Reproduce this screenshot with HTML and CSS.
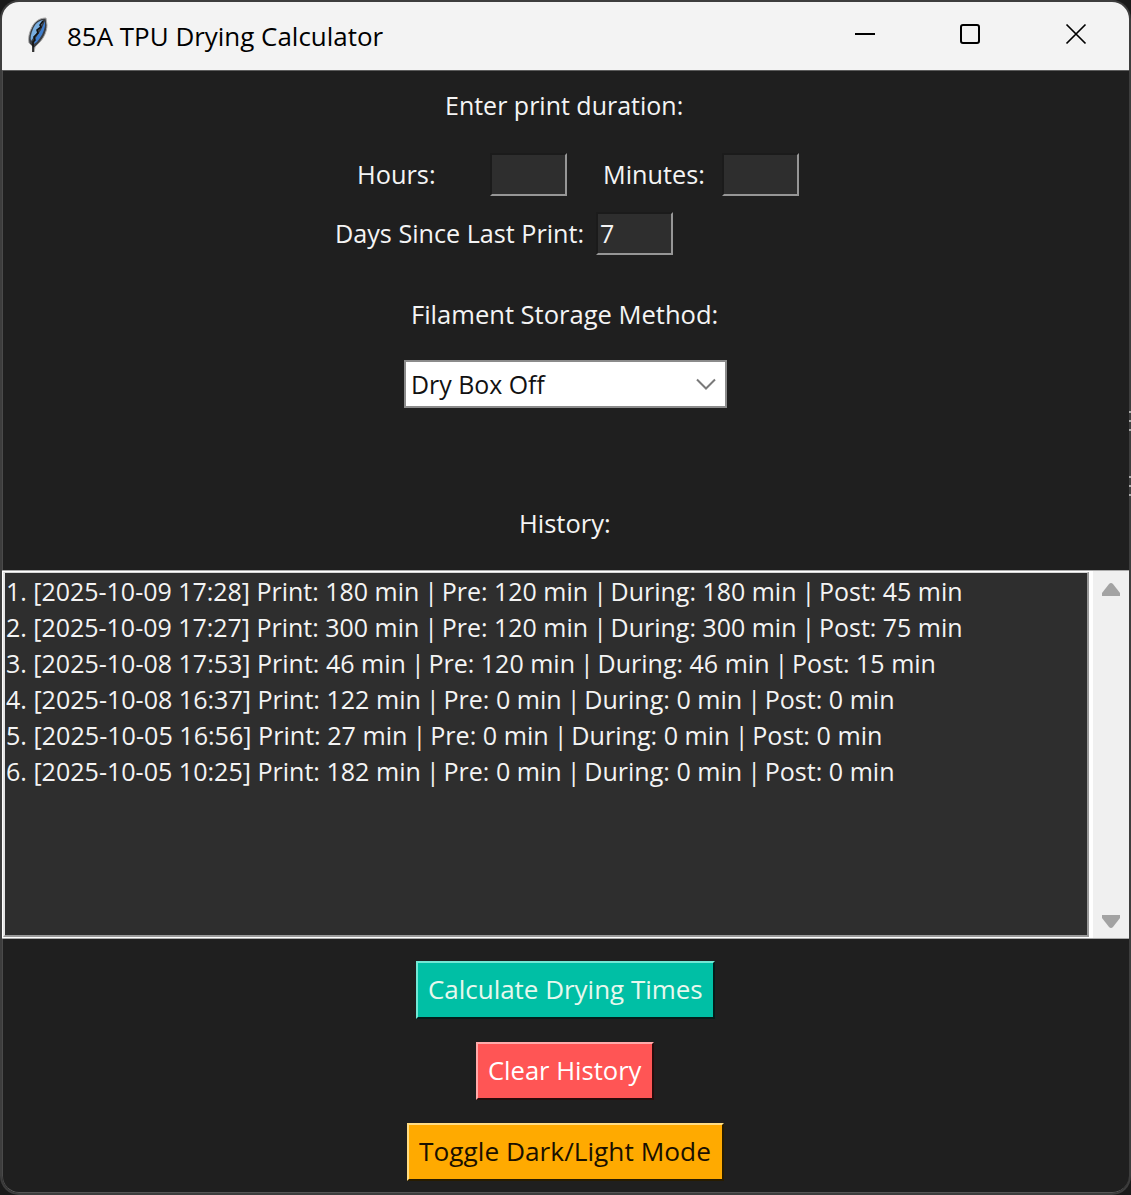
FILE: index.html
```html
<!DOCTYPE html>
<html lang="en">
<head>
<meta charset="utf-8">
<title>85A TPU Drying Calculator</title>
<link rel="stylesheet" href="styles.css">
</head>
<body>
<div class="window">
  <header class="titlebar">
    <svg class="feather" width="22" height="38" viewBox="0 0 22 38">
      <path d="M19 2C13 2 8 5 5 11C2 17 1 22 2 27L6 31L7 36L8 31L12 27C17 22 20 15 20 9Z" fill="#3a3d42" stroke="#aaa" stroke-width="1"/>
      <path d="M16 4C11 5 8 8 6 13C4 18 3 22 4 25L9 18L15 8Z" fill="#79aee0"/>
      <path d="M18 5L18 10C17 16 14 21 10 26L7 28L8 23L14 14Z" fill="#3f7dcc"/>
      <path d="M16 5L13 9L14 11L10 14L11 17L7 21L8 24L6 26V36" fill="none" stroke="#111" stroke-width="1.600"/>
    </svg>
    <h1 class="title"><span class="t t-title">85A TPU Drying Calculator</span></h1>
    <svg class="controls" width="232" height="24" viewBox="0 0 232 24" fill="none" stroke="#000" stroke-width="2">
      <path d="M0 12H20"/>
      <rect x="106" y="3" width="18" height="18" rx="2"/>
      <path d="M211.500 2.500L230.500 21.500M230.500 2.500L211.500 21.500" stroke-width="1.700"/>
    </svg>
  </header>
  <main class="content">
    <div class="label prompt"><span class="t t-enter">Enter print duration:</span></div>
    <div class="row time-row">
      <label class="hours"><span class="t t-hours">Hours:</span></label>
      <div class="entry"></div>
      <label class="minutes"><span class="t t-minutes">Minutes:</span></label>
      <div class="entry"></div>
    </div>
    <div class="row days-row">
      <label class="days"><span class="t t-days">Days Since Last Print:</span></label>
      <div class="entry"><span class="t">7</span></div>
    </div>
    <div class="label storage"><span class="t t-storage">Filament Storage Method:</span></div>
    <div class="combo">
      <span class="t t-combo">Dry Box Off</span>
      <svg width="20" height="12" viewBox="0 0 20 12" fill="none" stroke="#7a7a7a" stroke-width="2"><path d="M1 1.500L10 10.500L19 1.500"/></svg>
    </div>
    <div class="label history"><span class="t t-history">History:</span></div>
    <div class="list-row">
      <div class="listbox">
        <div class="item"><span class="t t-i1">1. [2025-10-09 17:28] Print: 180 min<b> | </b>Pre: 120 min<b> | </b>During: 180 min<b> | </b>Post: 45 min</span></div>
        <div class="item"><span class="t t-i1">2. [2025-10-09 17:27] Print: 300 min<b> | </b>Pre: 120 min<b> | </b>During: 300 min<b> | </b>Post: 75 min</span></div>
        <div class="item"><span class="t t-i3">3. [2025-10-08 17:53] Print: 46 min<b> | </b>Pre: 120 min<b> | </b>During: 46 min<b> | </b>Post: 15 min</span></div>
        <div class="item"><span class="t t-i4">4. [2025-10-08 16:37] Print: 122 min<b> | </b>Pre: 0 min<b> | </b>During: 0 min<b> | </b>Post: 0 min</span></div>
        <div class="item"><span class="t t-i5">5. [2025-10-05 16:56] Print: 27 min<b> | </b>Pre: 0 min<b> | </b>During: 0 min<b> | </b>Post: 0 min</span></div>
        <div class="item"><span class="t t-i4">6. [2025-10-05 10:25] Print: 182 min<b> | </b>Pre: 0 min<b> | </b>During: 0 min<b> | </b>Post: 0 min</span></div>
      </div>
      <div class="scrollbar">
        <svg width="20" height="15" viewBox="0 0 20 15"><path d="M1 14V11L8 2Q10 0 12 2L19 11V14Z" fill="#a3a3a3"/></svg>
        <svg width="20" height="15" viewBox="0 0 20 15"><path d="M1 1V4L8 13Q10 15 12 13L19 4V1Z" fill="#a3a3a3"/></svg>
      </div>
    </div>
    <div class="actions">
      <button class="btn calc"><span class="t t-calc">Calculate Drying Times</span></button>
      <button class="btn clear"><span class="t t-clear">Clear History</span></button>
      <button class="btn toggle"><span class="t t-toggle">Toggle Dark/Light Mode</span></button>
    </div>
  </main>
</div>
<div class="edge-marks"><i></i><i></i><i></i><i></i><i></i><i></i></div>
</body>
</html>
```
FILE: styles.css
```css
* { box-sizing: border-box; }
body {
  margin: 0;
  width: 1131px;
  height: 1195px;
  padding: 2px 2px 2px 2px;
  overflow: hidden;
  background: linear-gradient(#3b3b3b, #3b3b3b) 20px 0 / 1091px 2px no-repeat, #1a1a1a;
  color: #f4f4f4;
  font: 26px/36px "Open Sans", "Noto Sans", sans-serif;
}
.window {
  width: 1127px;
  height: 1191px;
  border-radius: 17px;
  overflow: hidden;
  display: flex;
  flex-direction: column;
  background: #1f1f1f;
  box-shadow: 0 0 0 2px #3d3d3d;
}
.titlebar {
  height: 69px;
  flex: none;
  display: flex;
  align-items: flex-start;
  background: #f3f3f3;
  border-bottom: 1px solid #5c5c5c;
  color: #000;
}
.feather { margin: 14px 0 0 25px; }
.title { margin: 16px 0 0 18px; font: inherit; width: 320px; white-space: nowrap; }
.controls { margin: 20px 42px 0 auto; }

/* Labels are set slightly condensed */
.t {
  display: inline-block;
  white-space: pre;
  transform: scaleX(0.96);
  transform-origin: 0 50%;
}
.t b { font-weight: inherit; letter-spacing: -1.45px; }
.t-title { transform: scaleX(0.998); }
.t-enter { transform: scaleX(0.961); }
.t-hours { transform: scaleX(0.975); }
.t-minutes { transform: scaleX(0.97); }
.t-days { transform: scaleX(0.968); }
.t-storage { transform: scaleX(0.982); }
.t-combo { transform: scaleX(0.957); }
.t-history { transform: scaleX(0.98); }
.t-i3 { transform: scaleX(0.962); }
.t-i4 { transform: scaleX(0.9636); }
.t-i5 { transform: scaleX(0.966); }
.t-calc { transform: scaleX(0.998); }
.t-clear { transform: scaleX(0.983); }
.t-toggle { transform: scaleX(1.01); }

.content {
  flex: 1;
  display: flex;
  flex-direction: column;
  border-left: 1px solid #4a4a4a;
  border-bottom: 1px solid #555;
  border-radius: 0 0 17px 17px;
}
.label { height: 36px; flex: none; }
.prompt { margin: 16px 0 0 442px; }
.row { display: flex; flex: none; align-items: flex-start; }
.row label { padding-top: 3px; white-space: nowrap; }
.time-row { margin: 30px 0 0 354px; height: 43px; }
.hours { width: 133px; }
.minutes { width: 120px; padding-left: 1px; margin-left: 35px; }
.days-row { margin: 16px 0 0 332px; height: 43px; }
.days { width: 261px; }
.entry {
  width: 77px;
  height: 43px;
  padding: 1px 0 0 2px;
  background: #2e2e2e;
  border: 2px solid;
  border-color: #1b1b1b #969696 #969696 #1b1b1b;
}
.storage { margin: 41px 0 0 408px; }
.combo {
  width: 323px;
  height: 48px;
  flex: none;
  margin: 28px 0 0 401px;
  padding: 0 9px 0 5px;
  display: flex;
  align-items: center;
  justify-content: space-between;
  background: #fff;
  border: 2px solid #8b8b8b;
  color: #111;
}
.history { margin: 97px 0 0 516px; }
.list-row {
  display: flex;
  flex: none;
  height: 369px;
  margin: 29px 0 0 -1px;
  background: #f0f0f0;
  border-top: 1px solid #aaa;
  border-bottom: 1px solid #aaa;
}
.listbox {
  width: 1088px;
  padding-left: 1px;
  background: #2e2e2e;
  border: 3px solid;
  border-top-width: 2px;
  border-color: #d8d8d8 #999 #999 #e4e4e4;
  outline: 1px solid #fff;
  outline-offset: -1px;
}
.item { height: 36px; }
.scrollbar {
  flex: 1;
  display: flex;
  flex-direction: column;
  align-items: center;
  justify-content: space-between;
  padding: 11px 0 9px 0;
  border-left: 3px solid #fff;
}
.actions { display: flex; flex-direction: column; gap: 23px; padding-top: 22px; }
.btn {
  height: 58px;
  padding: 0 0 2px 10px;
  border: 2px solid;
  font: inherit;
  color: #fff;
  text-align: left;
}
.calc { width: 299px; margin-left: 413px; background: #00bfa5; border-color: #73e8d5 #031d1a #031d1a #73e8d5; color: #e7f8ee; }
.clear { width: 178px; margin-left: 473px; background: #ff5555; border-color: #ffaaaa #280c0c #280c0c #ffaaaa; }
.toggle { width: 317px; margin-left: 404px; background: #ffaa00; border-color: #ffdc83 #281c00 #281c00 #ffdc83; color: #1a1000; }
.edge-marks { position: absolute; left: 1129px; top: 411px; width: 2px; height: 90px; }
.edge-marks i { display: block; height: 2px; margin-bottom: 7px; background: #aaa; }
.edge-marks i:nth-child(3) { margin-bottom: 45px; }
```
